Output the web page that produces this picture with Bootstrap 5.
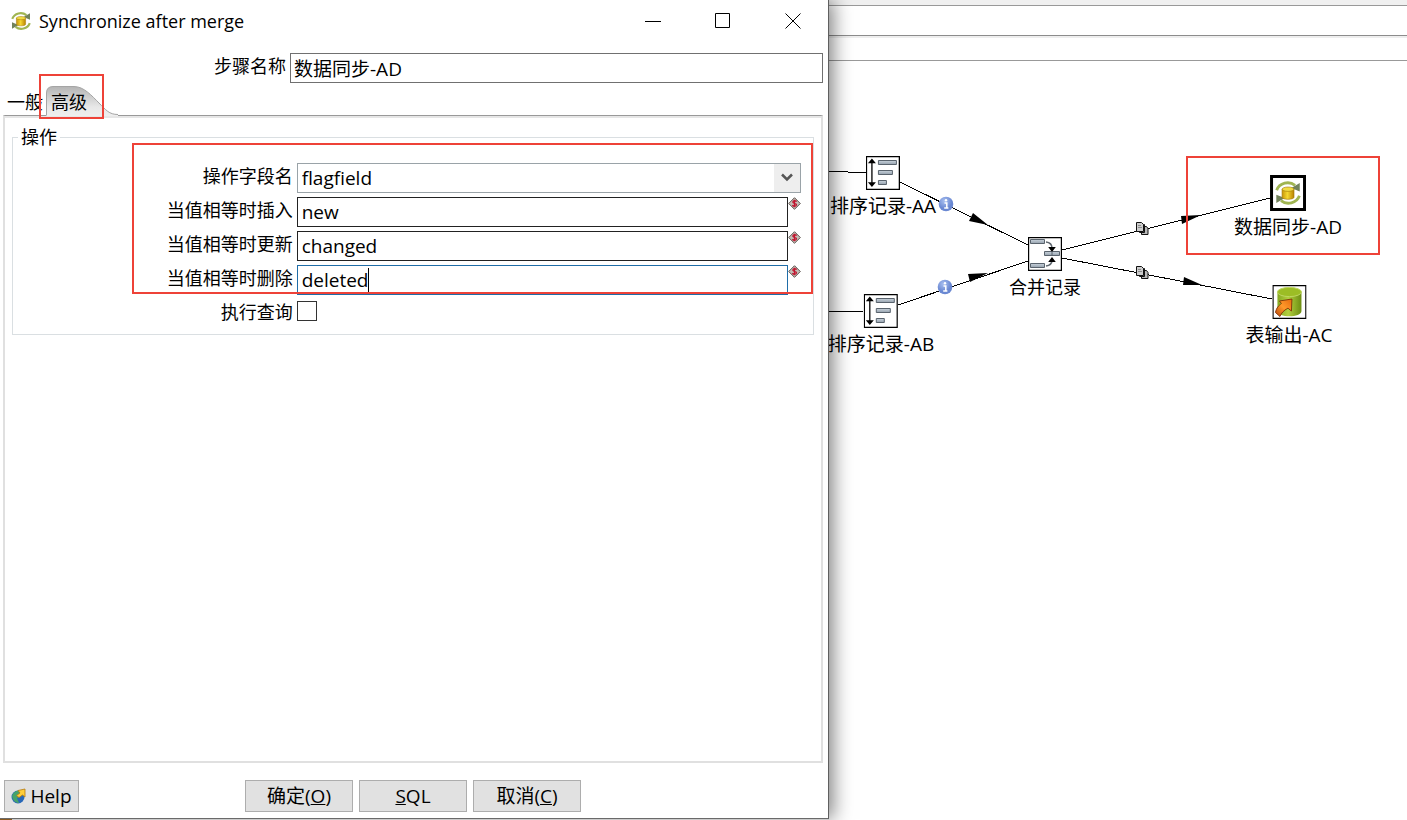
<!DOCTYPE html>
<html lang="zh-CN">
<head>
<meta charset="utf-8">
<meta name="viewport" content="width=device-width, initial-scale=1">
<title>Synchronize after merge</title>
<link href="https://cdn.jsdelivr.net/npm/bootstrap@5.3.0/dist/css/bootstrap.min.css" rel="stylesheet">
<style>
  body { font-family: "Open Sans", "Noto Sans CJK SC", sans-serif; font-size: 18px; line-height: 24px; color: #000; background: #fff; }
  .workspace { display: grid; grid-template-columns: minmax(0, 829fr) minmax(0, 578fr); }
  .left-pane { z-index: 2; background: #dcdcdc; }
  .dialog-window { background: #fff; border-right: 1px solid #5f5f5f; border-bottom: 1px solid #6a6a6a; box-shadow: 4px 0 18px rgba(0, 0, 0, .5); }
  .title-bar { height: 43px; padding: 0 0 2px 11px; }
  .title-bar h1 { font-size: 18px; line-height: 24px; font-weight: 400; }
  .win-btn { width: 70px; height: 40px; border: 0; background: none; padding: 0; }
  .lbl-col { flex: 0 0 36%; text-align: right; padding: 0 4px 4px 0; white-space: nowrap; }
  .name-row { padding: 0 5px 0 3px; margin-top: 10px; }
  .name-row .lbl-col { flex-basis: 35%; }
  .box-input, .box-select { height: 30px; border: 1px solid #222; border-radius: 0; padding: 0 4px; font-size: 19px; line-height: 24px; color: #000; background-color: #fff; outline: 0; min-width: 0; width: 100%; }
  .name-row .box-input { border-color: #707070; padding-left: 3px; }
  .box-select { border-color: #9aa3a8; appearance: none; }
  .box-input.active-box { border-color: #1f6da8; }
  .chevron { top: 1px; right: 1px; width: 26px; height: 28px; background: #eee; pointer-events: none; }
  .tab-strip { height: 32px; padding-left: 3px; }
  .tab-btn { border: 0; background: none; padding: 5px 4px 0; height: 32px; color: #000; }
  .tab-btn.chosen { margin-left: -3px; padding-left: 7px; isolation: isolate; }
  .tab-shape { left: 2px; top: 3px; z-index: -1; }
  .mark-box { border: 2px solid #ee4238; pointer-events: none; }
  .mark-tab { left: -5px; top: -9px; width: 65px; height: 45px; }
  .mark-form { left: 119px; right: 0; top: 5px; height: 151px; }
  .mark-node { left: 357px; top: 95px; width: 194px; height: 99px; }
  .tab-panel { margin: 0 5px 0 3px; border: 2px solid #e0e0e0; border-top: 1px solid #999; box-shadow: inset 0 2px #e6e6e6; padding: 21px 7px 0; }
  .op-group { border: 1px solid #dadfe2; height: 198px; padding-top: 25px; }
  .op-title { left: 5px; top: -14px; padding: 0 3px; background: #fff; line-height: 26px; }
  .op-row { height: 30px; margin-bottom: 4px; padding-right: 12px; }
  .var-mark { width: 13px; flex: none; }
  .caret-line { left: 71px; top: 3px; width: 1px; height: 24px; background: #000; }
  .tick { width: 20px; height: 20px; appearance: none; border: 1px solid #333; background: #fff; margin: 2px 0 0; }
  .footer-bar { display: grid; grid-template-columns: 1fr auto 1fr; padding: 17px 6px 6px 4px; }
  .push { height: 32px; border: 1px solid #adadad; background: #e1e1e1; padding: 0; color: #000; font-size: 19px; line-height: 24px; }
  .push-wide { width: 108px; }
  .help-btn { width: 75px; }
  .strip-a { height: 6px; background: #f0f0f0; border-bottom: 1px solid #999; }
  .strip-b { height: 30px; border-bottom: 1px solid #8c8c8c; }
  .strip-c { height: 25px; border-top: 2px solid #eee; border-bottom: 1px solid #999; }
  .step-node { transform: translateX(-50%); white-space: nowrap; }
  .step-node.coded { font-size: 19px; }
  .step-node svg { display: block; margin: 0 auto 4px; }
  .status-edge { height: 1px; background: linear-gradient(90deg, #8a5a20 12px, #ccc 12px); }
</style>
</head>
<body>
<svg width="0" height="0" class="position-absolute" aria-hidden="true">
  <defs>
    <linearGradient id="bar" x1="0" y1="0" x2="0" y2="1"><stop offset="0" stop-color="#c9d3dc"/><stop offset="1" stop-color="#95a1ad"/></linearGradient>
    <linearGradient id="gold"><stop offset="0" stop-color="#c89608"/><stop offset=".45" stop-color="#f5d731"/><stop offset="1" stop-color="#b98200"/></linearGradient>
    <linearGradient id="lime"><stop offset="0" stop-color="#86a820"/><stop offset=".45" stop-color="#b2cf3e"/><stop offset="1" stop-color="#6c8e12"/></linearGradient>
    <linearGradient id="flame" x1="0" y1="1" x2="1" y2="0"><stop offset="0" stop-color="#b8450a"/><stop offset=".5" stop-color="#ff9a2a"/><stop offset="1" stop-color="#e66a10"/></linearGradient>
    <radialGradient id="info" cx=".4" cy=".3"><stop offset="0" stop-color="#a9c0f0"/><stop offset="1" stop-color="#6a88d2"/></radialGradient>
    <symbol id="i-sync" viewBox="0 0 24 24">
      <path d="M1.500 9.500C4 2.500 13 .5 18.500 5" fill="none" stroke="#a0b552" stroke-width="2.600"/>
      <path d="M22.800 2.800v7.700l-7.800-3.200z" fill="#71825a"/>
      <path d="M22.500 14.500C20 21.500 11 23.500 5.500 19" fill="none" stroke="#a0b552" stroke-width="2.600"/>
      <path d="M1.200 21.200v-7.700l7.800 3.200z" fill="#71825a"/>
      <path d="M6.500 8.500v7.500c0 2.400 11 2.400 11 0V8.500z" fill="url(#gold)" stroke="#a47a08" stroke-width=".6"/>
      <ellipse cx="12" cy="8.500" rx="5.500" ry="2" fill="#f0dc45" stroke="#a47a08" stroke-width=".6"/>
    </symbol>
    <symbol id="i-sort" viewBox="0 0 34 34">
      <path d="M.5.5h33v33H.5z" fill="#fff" stroke="#000" stroke-width="1.400"/>
      <path d="M6 6v22" stroke="#000" stroke-width="1.300"/>
      <path d="M6 2.500l4 4.700H2zM6 31l4-4.700H2z"/>
      <g fill="url(#bar)" stroke="#59636d"><path d="M12.500 4.500h18v4h-18z"/><path d="M12.500 14.500h14v4h-14z"/><path d="M12.500 24.500h8v4h-8z"/></g>
    </symbol>
    <symbol id="i-merge" viewBox="0 0 34 34">
      <path d="M.5.5h33v33H.5z" fill="#fff" stroke="#000" stroke-width="1.400"/>
      <g fill="url(#bar)" stroke="#59636d"><path d="M2.500 2.500h14v4h-14z"/><path d="M16.500 14.500h15v4h-15z"/><path d="M2.500 26.500h14v4h-14z"/></g>
      <path d="M18 5c4 .5 6 3 6 6M18 29c4-.5 6-3 6-6" fill="none" stroke="#606870" stroke-width="1.500"/>
      <path d="M24 15l-3.800-5h7.600zM24 20l-3.800 5h7.600z"/><path d="M24 14v5" stroke="#59636d"/>
    </symbol>
    <symbol id="i-output" viewBox="0 0 34 34">
      <path d="M.5.5h33v33H.5z" fill="#fff" stroke="#000" stroke-width="1.400"/>
      <path d="M5 7v19c0 7 24 7 24 0V7z" fill="url(#lime)"/>
      <ellipse cx="17" cy="7" rx="12" ry="4.600" fill="#9cbd25" stroke="#bfd760"/>
      <path d="M19.500 14l-.5 12-3.500-2.800C11 25.500 9 28 7.500 31.500L3 27.500c1-5 3.500-7 6-9L7 16z" fill="url(#flame)" stroke="#7e3208" stroke-width=".9"/>
    </symbol>
    <symbol id="i-var" viewBox="0 0 13 13">
      <path d="M6.500.7l5.800 5.800-5.800 5.800L.7 6.500z" fill="#c4beb6" stroke="#5d5650"/>
      <path d="M8.700 4.500C7 3 4.300 4 5 5.500s3.800.8 3.500 2.500S5.500 9.500 4.300 8.200M6.500 2.700v7.600" fill="none" stroke="#c0152f" stroke-width="1.300"/>
    </symbol>
    <symbol id="i-copies" viewBox="0 0 13 13">
      <g fill="#b8b8b8" stroke="#111"><path d="M5.500 4.500h5l1.500 2v6H5.500z"/><path d="M3.500 2.500h5v8h-5z"/><path d="M.5.500h5l2 2v7h-7z" fill="#ccc"/></g>
      <path d="M2 3.500h3M2 5.500h4" stroke="#8a8a8a"/>
    </symbol>
    <symbol id="i-info" viewBox="0 0 16 16">
      <circle cx="8" cy="8" r="7.300" fill="url(#info)"/>
      <path d="M6.500 7h2.300v5M6.200 12h4.200" fill="none" stroke="#fff" stroke-width="1.500"/><circle cx="8" cy="4.200" r="1.200" fill="#fff"/>
    </symbol>
  </defs>
</svg>

<div class="workspace min-vh-100">
  <div class="left-pane position-relative d-flex flex-column">
    <form class="dialog-window d-flex flex-column flex-grow-1">
      <header class="title-bar d-flex align-items-center">
        <svg width="20" height="22" aria-hidden="true"><use href="#i-sync"/></svg>
        <h1 class="mb-0 ms-2 flex-grow-1">Synchronize after merge</h1>
        <button type="button" class="win-btn d-flex align-items-center justify-content-center" aria-label="Minimize"><svg width="16" height="16"><path d="M0 8.500h16" stroke="#000"/></svg></button>
        <button type="button" class="win-btn d-flex align-items-center justify-content-center" aria-label="Maximize"><svg width="16" height="16"><path d="M.5.5h14v14H.5z" fill="none" stroke="#000"/></svg></button>
        <button type="button" class="win-btn d-flex align-items-center justify-content-center" aria-label="Close"><svg width="16" height="16"><path d="M.5.500l15 15M15.500.500l-15 15" stroke="#000"/></svg></button>
      </header>

      <div class="name-row d-flex align-items-center">
        <label class="lbl-col" for="stepName">步骤名称</label>
        <input class="box-input" id="stepName" type="text" value="数据同步-AD">
      </div>

      <div class="tab-strip d-flex" role="tablist">
        <button type="button" class="tab-btn" role="tab">一般</button>
        <button type="button" class="tab-btn chosen position-relative" role="tab" aria-selected="true">高级
          <svg class="tab-shape position-absolute" width="76" height="30" aria-hidden="true">
            <defs><linearGradient id="tabfill" x1="0" y1="0" x2="0" y2="1"><stop offset="0" stop-color="#b4b4b4"/><stop offset=".7" stop-color="#e8e8e8"/><stop offset="1" stop-color="#eee"/></linearGradient></defs>
            <path d="M.5 29V7Q.5.500 7 .5H28C38 .5 46 10 53 17C60 24 63 28.500 72 28.500V30H.5z" fill="url(#tabfill)"/>
            <path d="M.5 29V7Q.5.500 7 .5H28C38 .5 46 10 53 17C60 24 63 28.500 72 28.500" fill="none" stroke="#a5a5a5"/>
          </svg>
          <span class="mark-box mark-tab position-absolute"></span>
        </button>
      </div>

      <section class="tab-panel flex-grow-1">
        <div class="op-group position-relative" role="group" aria-labelledby="opTitle">
          <div class="op-title position-absolute" id="opTitle">操作</div>
          <div class="op-row d-flex align-items-center">
            <label class="lbl-col" for="opField">操作字段名</label>
            <div class="position-relative flex-grow-1">
              <select class="box-select d-block" id="opField"><option>flagfield</option></select>
              <span class="chevron position-absolute d-flex align-items-center justify-content-center"><svg width="12" height="10"><path d="M1 1.500l5 5 5-5" fill="none" stroke="#555" stroke-width="2.500"/></svg></span>
            </div>
          </div>
          <div class="op-row d-flex align-items-center">
            <label class="lbl-col" for="insertVal">当值相等时插入</label>
            <input class="box-input" id="insertVal" type="text" value="new">
            <svg class="var-mark align-self-start" height="13"><use href="#i-var"/></svg>
          </div>
          <div class="op-row d-flex align-items-center">
            <label class="lbl-col" for="updateVal">当值相等时更新</label>
            <input class="box-input" id="updateVal" type="text" value="changed">
            <svg class="var-mark align-self-start" height="13"><use href="#i-var"/></svg>
          </div>
          <div class="op-row d-flex align-items-center">
            <label class="lbl-col" for="deleteVal">当值相等时删除</label>
            <div class="position-relative flex-grow-1">
              <input class="box-input active-box d-block" id="deleteVal" type="text" value="deleted">
              <span class="caret-line position-absolute"></span>
            </div>
            <svg class="var-mark align-self-start" height="13"><use href="#i-var"/></svg>
          </div>
          <div class="op-row d-flex align-items-center">
            <label class="lbl-col" for="doLookup">执行查询</label>
            <input class="tick align-self-start" id="doLookup" type="checkbox">
          </div>
          <span class="mark-box mark-form position-absolute"></span>
        </div>
      </section>

      <footer class="footer-bar">
        <div>
          <button type="button" class="push help-btn d-inline-flex align-items-center justify-content-center gap-1">
            <svg width="15" height="16" aria-hidden="true"><circle cx="7" cy="9" r="6.500" fill="#2868b8"/><path d="M1 8c1-4 5-6 7-5l2 5-4 2 2 5c-3 0-6-2-7-7z" fill="#46a36b"/><path d="M7 2.500L14 1v8l-2.500-2L8 9.500 5.500 7.500 9 5z" fill="#ffce3a" stroke="#b47a10" stroke-width=".8"/></svg>
            <span>Help</span>
          </button>
        </div>
        <div class="d-flex" style="gap: 6px">
          <button type="button" class="push push-wide">确定(<u>O</u>)</button>
          <button type="button" class="push push-wide"><u>S</u>QL</button>
          <button type="button" class="push push-wide">取消(<u>C</u>)</button>
        </div>
      </footer>
    </form>
    <div class="status-edge"></div>
  </div>

  <main class="d-flex flex-column overflow-hidden bg-white">
    <div class="strip-a"></div>
    <div class="strip-b"></div>
    <div class="strip-c"></div>
    <div class="position-relative flex-grow-1">
      <svg class="position-absolute top-0 start-0 w-100 h-100" aria-hidden="true">
        <g stroke="#000" fill="none" shape-rendering="crispEdges">
          <path d="M0 110L37 112M0 251L35 250M71 121L199 184M69 244L199 200M233 189L441 137M233 197L443 238"/>
        </g>
        <path d="M159 164l-19-4 4-8zM159 212l-18 9-2-8zM372 154l-19 9-1-8zM373 224l-19 0 1-8z"/>
        <use href="#i-info" x="109" y="135" width="16" height="16"/>
        <use href="#i-info" x="108" y="218" width="16" height="16"/>
        <use href="#i-copies" x="307" y="161" width="13" height="13"/>
        <use href="#i-copies" x="307" y="205" width="13" height="13"/>
      </svg>
      <div class="step-node coded position-absolute" style="left: 54px; top: 95px"><svg width="34" height="34"><use href="#i-sort"/></svg>排序记录-AA</div>
      <div class="step-node coded position-absolute" style="left: 52px; top: 233px"><svg width="34" height="34"><use href="#i-sort"/></svg>排序记录-AB</div>
      <div class="step-node position-absolute" style="left: 216px; top: 176px"><svg width="34" height="34"><use href="#i-merge"/></svg>合并记录</div>
      <div class="step-node coded position-absolute" style="left: 459px; top: 114px"><svg width="36" height="36"><path d="M1.500 1.500h33v33h-33z" fill="#fff" stroke="#000" stroke-width="3"/><use href="#i-sync" x="5" y="4" width="26" height="28"/></svg>数据同步-AD</div>
      <div class="step-node coded position-absolute" style="left: 460px; top: 224px"><svg width="34" height="34"><use href="#i-output"/></svg>表输出-AC</div>
      <span class="mark-box mark-node position-absolute"></span>
    </div>
  </main>
</div>
<script src="https://cdn.jsdelivr.net/npm/bootstrap@5.3.0/dist/js/bootstrap.bundle.min.js"></script>
</body>
</html>
